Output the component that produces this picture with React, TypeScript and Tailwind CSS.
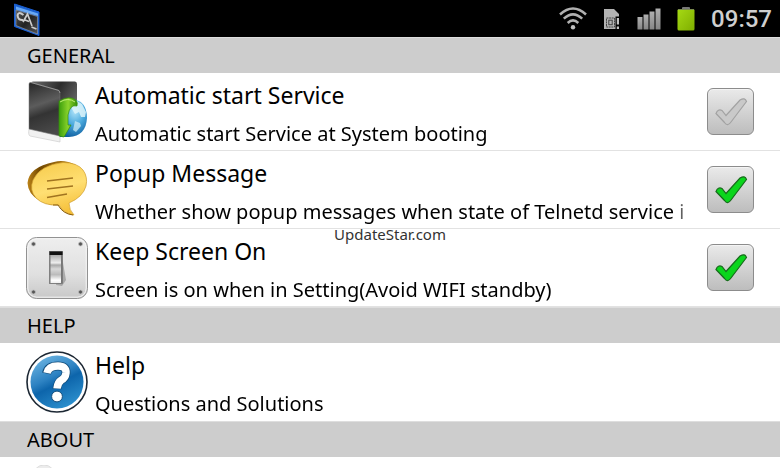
import React, { useState } from "react";

function ConsoleIcon() {
  return (
    <svg viewBox="0 0 28 34" className="h-[34px] w-7" aria-hidden="true">
      <defs>
        <linearGradient id="console" x1="0" y1="0" x2="1" y2="1">
          <stop offset="0" stopColor="#5a5a5a" />
          <stop offset="0.5" stopColor="#222" />
          <stop offset="1" stopColor="#555" />
        </linearGradient>
      </defs>
      <path d="M1.5 2 L26 10 V33.5 L1.5 24.5 Z" fill="#1c62d0" stroke="#1a5fd4" />
      <path d="M3 4.5 L25 11.5 V14 L3 7.5 Z" fill="#69a9f4" />
      <path d="M3 8 L24.500 14.500 V32 L3 23.500 Z" fill="url(#console)" stroke="#9a9a9a" strokeWidth="0.6" />
      <path d="M10.500 13 Q5 9 4.600 13.500 Q5 18.500 10 18" fill="none" stroke="#ccc" strokeWidth="2" />
      <path d="M10 20 L14.500 12 L19 24 M12 18 L16 19.500 M18.500 25 L23.500 27" fill="none" stroke="#ccc" strokeWidth="1.7" />
    </svg>
  );
}

function WifiIcon() {
  return (
    <svg viewBox="0 0 28 24" className="h-6 w-7" fill="none" stroke="#b0b0b0" strokeWidth="2.5" aria-hidden="true">
      <path d="M1 7.500 Q14 -4.500 27 7.500" />
      <path d="M4.800 11.700 Q14 3 23.200 11.700" />
      <path d="M8.700 16 Q14 10.800 19.300 16" />
      <circle cx="14" cy="20.200" r="2.200" fill="#c0c0c0" stroke="none" />
    </svg>
  );
}

function SimIcon() {
  return (
    <svg viewBox="0 0 18 22" className="h-[22px] w-[18px]" aria-hidden="true">
      <path d="M1 1 H11 L16 6 V8.500 H12.500 V21 H1 Z" fill="#b3b3b3" />
      <rect x="3.500" y="10" width="8" height="9" fill="none" stroke="#444" strokeDasharray="2 0.6" />
      <rect x="5.800" y="12.200" width="3.400" height="4.500" fill="none" stroke="#444" />
      <path d="M13.800 10 H16 V16.500 H13.800 Z M13.800 18.500 H16 V21 H13.800 Z" fill="#c4c4c4" />
    </svg>
  );
}

function SignalIcon() {
  return (
    <svg viewBox="0 0 24 22" className="h-[22px] w-6" aria-hidden="true">
      <defs>
        <linearGradient id="signal" x1="0" y1="0" x2="0" y2="1">
          <stop offset="0" stopColor="#b0b0b0" />
          <stop offset="1" stopColor="#858585" />
        </linearGradient>
      </defs>
      <g fill="url(#signal)">
        <rect x="0.500" y="9" width="5" height="12.500" />
        <rect x="6.500" y="6.500" width="5" height="15" />
        <rect x="12.500" y="3.500" width="5" height="18" />
        <rect x="18.500" y="0.500" width="5" height="21" />
      </g>
    </svg>
  );
}

function BatteryIcon() {
  return (
    <svg viewBox="0 0 18 24" className="h-6 w-[18px]" aria-hidden="true">
      <defs>
        <linearGradient id="battery" x1="0" y1="0" x2="1" y2="1">
          <stop offset="0" stopColor="#a6da14" />
          <stop offset="1" stopColor="#7fae00" />
        </linearGradient>
      </defs>
      <rect x="5" y="0" width="8" height="3" rx="1" fill="#777" />
      <rect x="0.500" y="2" width="17" height="21.500" rx="1.500" fill="url(#battery)" />
      <path d="M1 2.500 H17" stroke="#7c8c50" />
    </svg>
  );
}

function ServiceIcon() {
  return (
    <svg viewBox="0 0 62 62" className="size-[62px]" aria-hidden="true">
      <defs>
        <linearGradient id="back" x1="0" y1="0" x2="1" y2="0.6">
          <stop offset="0" stopColor="#6d6d6d" />
          <stop offset="0.5" stopColor="#2c2c2c" />
          <stop offset="1" stopColor="#707070" />
        </linearGradient>
        <linearGradient id="cover" x1="0.3" y1="0" x2="0.5" y2="1">
          <stop offset="0" stopColor="#2d2d2d" />
          <stop offset="0.4" stopColor="#5c5c5c" />
          <stop offset="0.6" stopColor="#333" />
          <stop offset="1" stopColor="#4a4a4a" />
        </linearGradient>
        <radialGradient id="globe" cx="0.55" cy="0.3" r="0.75">
          <stop offset="0" stopColor="#b4e6fa" />
          <stop offset="0.5" stopColor="#4aa9dd" />
          <stop offset="1" stopColor="#0e5c9d" />
        </radialGradient>
        <linearGradient id="arrow" x1="0" y1="0" x2="1" y2="0">
          <stop offset="0" stopColor="#3b9e0c" />
          <stop offset="0.5" stopColor="#8bd42c" />
          <stop offset="1" stopColor="#348d08" />
        </linearGradient>
      </defs>
      <path d="M3 48 L34 55 V61 L4 55 Q2 54 3 48 Z" fill="#f1f1f1" stroke="#cfcfcf" strokeWidth="0.7" />
      <path d="M5 2 Q5 0.500 7 0.500 H49 Q51 0.500 51 3 V48 H8 Z" fill="url(#back)" />
      <path d="M3 3 Q3 1 5 1.500 L32 9 Q34 10 34 12 V55 L3 48 Z" fill="url(#cover)" stroke="#777" strokeWidth="0.5" />
      <path d="M5 1.500 L33 9.500 L34 12" fill="none" stroke="#aaa" strokeWidth="0.7" />
      <path d="M34 29 Q38 18 47 18.500 Q61 20 61 37 Q60 55 43 56 H34 Z" fill="url(#globe)" />
      <path d="M46 23 L51 20 L56 23 L60 31 L59 36 L55 36 L53 31 L49 33 L46 28 Z" fill="#def4fa" opacity="0.85" />
      <path d="M49 40 L54 42 L55 45 L50 51 L47 49 Z" fill="#cbeaf6" opacity="0.75" />
      <path d="M33 20 Q43 14 50 19 Q52 22 51 25 Q44 23 42 34 V44 H45 L38 56 L33 55 Z" fill="url(#arrow)" stroke="#338d0c" strokeWidth="0.7" />
      <path d="M34 21 Q42 16 49 21" fill="none" stroke="#c1ef77" />
    </svg>
  );
}

function PopupIcon() {
  return (
    <svg viewBox="0 0 62 62" className="size-[62px]" aria-hidden="true">
      <defs>
        <linearGradient id="bubble" x1="0.3" y1="0" x2="0.6" y2="1">
          <stop offset="0" stopColor="#f7cd50" />
          <stop offset="0.5" stopColor="#ffdf73" />
          <stop offset="1" stopColor="#f4bd35" />
        </linearGradient>
        <linearGradient id="bubbleSide" x1="0" y1="0" x2="1" y2="0">
          <stop offset="0" stopColor="#bd8419" />
          <stop offset="0.25" stopColor="#724800" />
          <stop offset="1" stopColor="#c28c1c" />
        </linearGradient>
      </defs>
      <path d="M28 3 Q38 0 50 6 L26 46 Q19 45 13 41 Q2 35 1.500 24 Q3 8 28 3 Z" fill="url(#bubbleSide)" />
      <path d="M37 3.500 Q51 3.500 57 11 Q62 18 60 27 Q57 38 43 44 Q43 51 48 56 Q38 55 33 46 Q18 47 10 39 Q3 31 7 21 Q14 6 37 3.500 Z" fill="url(#bubble)" stroke="#cf9c2b" strokeWidth="0.7" />
      <path d="M27 46 L32 46 Q37 55 47 56" fill="none" stroke="#8d5f0c" />
      <path d="M21 22 L47 19 M21 30 L47 27 M21 38.500 L41 35" stroke="#a17420" strokeWidth="1.5" />
    </svg>
  );
}

function SwitchIcon() {
  return (
    <svg viewBox="0 0 62 62" className="size-[62px]" aria-hidden="true">
      <defs>
        <linearGradient id="plate" x1="0" y1="0" x2="0" y2="1">
          <stop offset="0" stopColor="#eee" />
          <stop offset="0.6" stopColor="#e0e0e0" />
          <stop offset="1" stopColor="#c8c8c8" />
        </linearGradient>
        <linearGradient id="rocker" x1="0" y1="0" x2="0" y2="1">
          <stop offset="0" stopColor="#aaa" />
          <stop offset="0.28" stopColor="#eee" />
          <stop offset="0.36" stopColor="#aaa" />
          <stop offset="0.5" stopColor="#d8d8d8" />
          <stop offset="0.7" stopColor="#bbb" />
          <stop offset="0.9" stopColor="#fff" />
          <stop offset="1" stopColor="#eee" />
        </linearGradient>
      </defs>
      <rect x="0.500" y="0.500" width="61" height="61" rx="10" fill="url(#plate)" stroke="#929292" />
      <rect x="1.800" y="1.800" width="58.400" height="58.400" rx="9" fill="none" stroke="#f5f5f5" />
      <g fill="#555" stroke="#bbb" strokeWidth="0.8">
        <circle cx="7.500" cy="7" r="2" />
        <circle cx="54.500" cy="7" r="2" />
        <circle cx="7.500" cy="55" r="2" />
        <circle cx="54.500" cy="55" r="2" />
      </g>
      <path d="M36 20 L40 43 L36 49 L30 48 Z" fill="#888" opacity="0.6" />
      <rect x="23.500" y="14.500" width="13" height="32" fill="#777" stroke="#777" strokeWidth="0.8" />
      <rect x="23.500" y="14.500" width="13" height="3.500" fill="#111" />
      <path d="M24.500 18 H35 V46 H24.500 Z" fill="url(#rocker)" />
    </svg>
  );
}

function HelpIcon() {
  return (
    <svg viewBox="0 0 62 62" className="size-[62px]" aria-hidden="true">
      <defs>
        <linearGradient id="disc" x1="0.2" y1="0" x2="0.7" y2="1">
          <stop offset="0" stopColor="#6db5e2" />
          <stop offset="0.4" stopColor="#2d82c2" />
          <stop offset="0.55" stopColor="#0d65ab" />
          <stop offset="1" stopColor="#2d91cf" />
        </linearGradient>
      </defs>
      <circle cx="31" cy="31" r="30" fill="#fff" stroke="#1c2733" strokeWidth="1.6" />
      <circle cx="31" cy="31" r="26.500" fill="url(#disc)" />
      <g fill="none" strokeLinejoin="round">
        <path d="M20.500 22.500 Q22 15 32 15 Q40.500 15 40 22 Q39.500 27 35.500 29 Q31.500 31.500 31 38" stroke="#134e7c" strokeWidth="9" />
        <path d="M21 22 Q22.500 15 32 15 Q40.500 15 40 22 Q39.500 27 35.500 29 Q31.500 31.500 31 37.500" stroke="#fff" strokeWidth="7.5" />
      </g>
      <circle cx="31" cy="45.500" r="5.400" fill="#fff" stroke="#134e7c" />
    </svg>
  );
}

function AboutIcon() {
  return (
    <svg viewBox="0 0 62 62" className="size-[62px]" aria-hidden="true">
      <circle cx="18" cy="11" r="11" fill="#ececec" stroke="#ddd" />
    </svg>
  );
}

function SectionTitle({ children }: { children: React.ReactNode }) {
  return (
    <h2 className="h-9 border-t border-[#dedede] bg-[#cdcdcd] pl-[27px] text-xl leading-9">{children}</h2>
  );
}

type RowProps = {
  icon: React.ReactNode;
  title: string;
  summary: string;
};

function RowContent({ icon, title, summary }: RowProps) {
  return (
    <>
      <span className="w-[69px] shrink-0">{icon}</span>
      <span className="min-w-0 flex-1 pt-0.5 whitespace-nowrap">
        <span className="block text-[23px] leading-[42px]">{title}</span>
        {/* long summaries fade out before the checkbox */}
        <span className="block overflow-hidden text-xl leading-9 [mask-image:linear-gradient(to_right,black_calc(100%-30px),transparent_calc(100%-18px))]">
          {summary}
        </span>
      </span>
    </>
  );
}

function CheckRow({ defaultOn = false, ...row }: RowProps & { defaultOn?: boolean }) {
  const [on, setOn] = useState(defaultOn);

  return (
    <label className="flex h-[78px] items-center border-b border-[#e2e2e2] px-[26px]">
      <RowContent {...row} />
      <span className="grid shrink-0 place-items-center">
        <input
          type="checkbox"
          checked={on}
          onChange={(e) => setOn(e.target.checked)}
          className="col-start-1 row-start-1 size-[47px] appearance-none rounded-md border border-[#8c8c8c] bg-linear-to-b from-[#eaeaea] to-[#bdbdbd] shadow-[inset_0_1px_0_#f4f4f4]"
        />
        <svg viewBox="0 0 47 47" className="pointer-events-none col-start-1 row-start-1 size-[47px]" aria-hidden="true">
          <path
            d="M9 25.500 Q11 20.500 15 22.500 L19 27.500 L33 12 Q38 9 39.500 13.500 L24 34 Q20.500 39 17.500 34.500 Z"
            fill={on ? "#0bd51c" : "#c9c9c9"}
            stroke={on ? "#176b1b" : "#a2a2a2"}
            strokeWidth="1.2"
          />
        </svg>
      </span>
    </label>
  );
}

export default function App() {
  return (
    <div className="relative flex h-screen flex-col overflow-hidden bg-white font-['Noto_Sans',sans-serif] text-black">
      {/* Status bar */}
      <header className="flex h-[37px] shrink-0 items-center justify-between bg-black pr-2 pl-[13px]">
        <ConsoleIcon />
        <div className="flex items-center gap-4">
          <WifiIcon />
          <SimIcon />
          <SignalIcon />
          <BatteryIcon />
          <time className="font-[Roboto,sans-serif] text-2xl font-medium text-[#cfcfcf]">09:57</time>
        </div>
      </header>

      <main>
        <SectionTitle>GENERAL</SectionTitle>
        <CheckRow icon={<ServiceIcon />} title="Automatic start Service" summary="Automatic start Service at System booting" />
        <CheckRow
          icon={<PopupIcon />}
          title="Popup Message"
          summary="Whether show popup messages when state of Telnetd service i"
          defaultOn
        />
        <CheckRow icon={<SwitchIcon />} title="Keep Screen On" summary="Screen is on when in Setting(Avoid WIFI standby)" defaultOn />

        <SectionTitle>HELP</SectionTitle>
        <a href="#help" className="flex h-[78px] items-center px-[26px]">
          <RowContent icon={<HelpIcon />} title="Help" summary="Questions and Solutions" />
        </a>

        <SectionTitle>ABOUT</SectionTitle>
        <div className="flex h-[78px] items-center px-[26px]">
          <AboutIcon />
        </div>
      </main>

      {/* Watermark */}
      <div className="pointer-events-none absolute inset-0 flex items-center justify-center text-[15px] text-[#333]">UpdateStar.com</div>
    </div>
  );
}
